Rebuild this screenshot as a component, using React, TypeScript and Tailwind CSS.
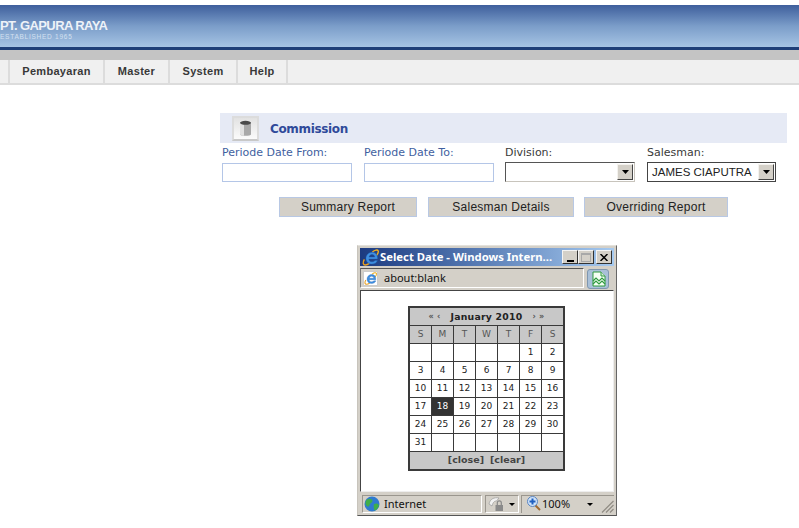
import React from "react";

const IeIcon = ({ size = 18 }: { size?: number }) => (
  <svg width={size} height={size} viewBox="0 0 18 18" className="shrink-0">
    <path d="M2.5 11C0.5 14.5 1 17 3.5 17C5 17 6.8 16 8 15" fill="none" stroke="#e8a020" strokeWidth="1.5" />
    <path d="M11 3.2C13.5 1 16.5 0.3 17.2 2C17.6 3.3 16.8 5 15.4 6.8" fill="none" stroke="#f0b020" strokeWidth="1.4" />
    <path d="M14.5 10.6H7.2C7.4 12.6 9 13.6 10.6 13.6C12 13.6 13 13 13.8 12.2H16.4C15.4 14.8 13.3 16 10.6 16C7 16 4.2 13.6 4.2 10C4.2 6 7.2 3.4 10.8 3.4C14.4 3.4 16.6 6 16.4 10.6ZM7.4 8.6H13.6C13.4 7 12.3 5.8 10.6 5.8C9 5.8 7.7 7 7.4 8.6Z" fill="#3f8fe0" fillRule="evenodd" stroke="#1c5fb0" strokeWidth="0.4" />
  </svg>
);

const Field = ({ label, width, dark, children }: { label: string; width: string; dark?: boolean; children: React.ReactNode }) => (
  <div className={`flex flex-col ${width}`}>
    <span className={`h-[20px] text-[11px] leading-[19px] whitespace-nowrap [font-family:'DejaVu_Sans',sans-serif] ${dark ? "text-[#3a3a3a]" : "text-[#3f5f9f]"}`}>{label}</span>
    {children}
  </div>
);

const TextInput = () => <div className="h-[19px] border border-[#b4c6e7] bg-white" />;

const Select = ({ value }: { value?: string }) => (
  <div className={`-mt-px flex h-[20px] items-stretch border bg-white p-px ${value ? "border-[#444]" : "border-t-[#555] border-l-[#555] border-r-[#c8c4bc] border-b-[#c8c4bc]"}`}>
    <span className="flex-1 pl-[3px] text-[11.5px] leading-[17px] whitespace-nowrap text-[#222] [font-family:'Liberation_Sans',sans-serif]">{value}</span>
    <span className="flex w-[16px] items-center justify-center border border-t-[#f4f2ee] border-l-[#f4f2ee] border-r-[#444] border-b-[#444] bg-[#d4d0c8]">
      <svg width="7" height="4" viewBox="0 0 7 4"><path d="M0 0H7L3.5 4Z" fill="#000" /></svg>
    </span>
  </div>
);

const Btn = ({ label, width }: { label: string; width: string }) => (
  <button className={`h-[20px] ${width} border border-[#b8c8e4] bg-[#d4d0c8] text-[12px] leading-[18px] tracking-[0.25px] text-[#222] [font-family:'Liberation_Sans',sans-serif]`}>{label}</button>
);

const weeks: (number | null)[][] = [
  [null, null, null, null, null, 1, 2],
  [3, 4, 5, 6, 7, 8, 9],
  [10, 11, 12, 13, 14, 15, 16],
  [17, 18, 19, 20, 21, 22, 23],
  [24, 25, 26, 27, 28, 29, 30],
  [31, null, null, null, null, null, null],
];

const Calendar = () => (
  <div className="h-fit w-[157px] border-2 border-[#3a3a3a] bg-[#3a3a3a] text-[#222] [font-family:'DejaVu_Sans',sans-serif]">
    <div className="flex h-[17px] items-center justify-center gap-[10px] bg-[#c8c8c8] text-[9.3px] font-bold tracking-[0.25px]">
      <span className="text-[8px] text-[#555]">« ‹</span>
      <span>January 2010</span>
      <span className="text-[8px] text-[#555]">› »</span>
    </div>
    <div className="mt-px grid grid-cols-[repeat(7,21px)] gap-px">
      {["S", "M", "T", "W", "T", "F", "S"].map((d, i) => (
        <div key={i} className="flex h-[17px] items-center justify-center bg-[#c8c8c8] text-[9px] text-[#555]">{d}</div>
      ))}
      {weeks.flat().map((d, i) => (
        <div key={i} className={`flex h-[17px] items-center justify-center text-[9px] ${d === 18 ? "bg-[#333] text-white" : "bg-white"}`}>{d}</div>
      ))}
    </div>
    <div className="mt-px flex h-[17px] items-center justify-center gap-[6px] bg-[#c8c8c8] text-[9.5px] font-bold text-[#444]">
      <span>[close]</span>
      <span>[clear]</span>
    </div>
  </div>
);

const CapBtn = ({ children }: { children: React.ReactNode }) => (
  <div className="flex h-[14px] w-[16px] items-center justify-center border border-t-[#f4f4f4] border-l-[#f4f4f4] border-r-[#333] border-b-[#333] bg-[#d4d0c8]">{children}</div>
);

const PopupWindow = () => (
  <div className="absolute top-[245px] left-[357px] flex h-[271px] w-[260px] flex-col border border-t-[#e4e2dc] border-l-[#c8c4bc] border-r-[#666] border-b-[#555] bg-[#d4d0c8] p-[2px]">
    <div className="flex h-[18px] shrink-0 items-center bg-gradient-to-r from-[#1c3a80] to-[#a6caf0] pr-[2px] pl-[2px]">
      <IeIcon size={17} />
      <span className="ml-px flex-1 text-[11.3px] font-bold whitespace-nowrap text-white [font-family:'Noto_Sans',sans-serif]">Select Date - Windows Intern...</span>
      <div className="flex">
        <CapBtn><span className="mt-[7px] h-[2px] w-[7px] bg-black" /></CapBtn>
        <CapBtn><span className="h-[9px] w-[10px] border border-t-2 border-[#a8a8a8]" /></CapBtn>
        <span className="w-[2px]" />
        <CapBtn>
          <svg width="8" height="7" viewBox="0 0 8 7"><path d="M0.5 0L7.5 7M7.5 0L0.5 7" stroke="#000" strokeWidth="1.5" /></svg>
        </CapBtn>
      </div>
    </div>
    <div className="mt-[2px] flex h-[22px] shrink-0 gap-[3px] pr-[5px]">
      <div className="flex h-[20px] flex-1 items-center border border-t-[#555] border-l-[#777] border-r-white border-b-white pl-[2px]">
        <div className="flex h-[15px] w-[15px] items-center justify-center border border-[#ccc] bg-white">
          <IeIcon size={13} />
        </div>
        <span className="mt-px ml-[6px] text-[11px] text-[#111] [font-family:'Noto_Sans',sans-serif]">about:blank</span>
      </div>
      <div className="mt-px flex h-[20px] w-[22px] items-center justify-center rounded-[3px] border border-[#7f97b0] bg-[#a9c0d8]">
        <svg width="15" height="16" viewBox="0 0 15 16">
          <path d="M2 1H10L14 5V15H2Z" fill="#f4fff4" stroke="#2f9a3f" />
          <path d="M10 1V5H14" fill="#d8f0d8" stroke="#2f9a3f" />
          <path d="M2 10L5 7L8 10L11 7L14 10M2 13L5 10L8 13L11 10L14 13" fill="none" stroke="#2f9a3f" strokeWidth="1.2" />
        </svg>
      </div>
    </div>
    <div className="flex min-h-0 flex-1 border border-t-[#444] border-l-[#444] border-r-[#eee] border-b-[#eee] bg-white pt-[15px] pl-[47px]">
      <Calendar />
    </div>
    <div className="flex h-[21px] shrink-0 items-end text-[11px] text-[#111] [font-family:'Noto_Sans',sans-serif]">
      <div className="ml-[2px] flex h-[18px] w-[120px] items-center gap-[4px] border border-t-[#9a968e] border-l-[#9a968e] border-r-white border-b-white pl-[1px]">
        <svg width="16" height="16" viewBox="0 0 16 16" className="shrink-0">
          <circle cx="8" cy="8" r="7.5" fill="#2f7ad0" />
          <path d="M3 3.5C6 2 8 3 8.5 5C8 7 6 7 5.5 9C5 11 3.5 11 2 9C1 7 1.5 5 3 3.5ZM10 8C12 7 14 7.5 15 9C14.5 12 12.5 14 10.5 14.5C9.5 12 9.5 10 10 8Z" fill="#3fae4a" />
        </svg>
        <span>Internet</span>
      </div>
      <div className="ml-[3px] flex h-[18px] w-[34px] items-center gap-[4px] border border-t-[#9a968e] border-l-[#9a968e] border-r-white border-b-white pl-[2px]">
        <svg width="17" height="16" viewBox="0 0 17 16" className="shrink-0">
          <path d="M1 8C2 3 6 1 11 2L8.5 5C6.5 5 5 6 4 10Z" fill="#f2f2f2" stroke="#9a9a9a" strokeWidth="0.7" />
          <rect x="7.5" y="9" width="7.5" height="6" fill="#8a8a8a" />
          <path d="M9.3 9V6.8A2 2 0 0 1 13.3 6.8V9" fill="none" stroke="#888" strokeWidth="1.2" />
        </svg>
        <svg width="6" height="3" viewBox="0 0 6 3" className="shrink-0"><path d="M0 0H6L3 3Z" fill="#000" /></svg>
      </div>
      <div className="relative ml-[2px] flex h-[18px] flex-1 items-center border-t border-l border-t-[#9a968e] border-l-[#9a968e] pl-[5px]">
        <svg width="14" height="15" viewBox="0 0 14 15" className="mb-[2px] shrink-0">
          <path d="M8 9L13 14" stroke="#a06a30" strokeWidth="2" />
          <circle cx="5.5" cy="5.5" r="5" fill="#cfe3fa" stroke="#5a84c0" />
          <path d="M5.5 2.5V8.5M2.5 5.5H8.5" stroke="#1f5fc0" strokeWidth="2" />
        </svg>
        <span className="ml-px">100%</span>
        <svg className="ml-[17px] shrink-0" width="6" height="3" viewBox="0 0 6 3"><path d="M0 0H6L3 3Z" fill="#000" /></svg>
        <svg className="absolute right-0 bottom-0" width="13" height="13" viewBox="0 0 13 13">
          <path d="M12.5 1L1 12.5M12.5 5L5 12.5M12.5 9L9 12.5" stroke="#8f8b83" strokeWidth="1.2" />
        </svg>
      </div>
    </div>
  </div>
);

export default function App() {
  return (
    <div className="relative h-[528px] w-[799px] overflow-hidden bg-white">
      <header className="mt-[5px]">
        <div className="flex h-[42px] flex-col justify-start bg-gradient-to-b from-[#3f5f9c] via-[#7b9dc9] to-[#a6c4e4] pt-[14px]">
          <div className="text-[13px] leading-[14px] font-bold tracking-[-0.6px] text-[#eef2f8] [font-family:'Liberation_Sans',sans-serif]">PT. GAPURA RAYA</div>
          <div className="text-[6.5px] leading-[8px] tracking-[0.75px] text-[#d4e0f0] [font-family:'Liberation_Sans',sans-serif]">ESTABLISHED 1965</div>
        </div>
        <div className="h-[3px] bg-[#1f3f78]" />
        <div className="h-[10px] bg-[#c4c4c4]" />
      </header>
      <nav className="flex h-[25px] border-b-2 border-[#dcdcdc] bg-[#f0f0f0] text-[11px] font-semibold tracking-[0.3px] text-[#383838] [font-family:'Liberation_Sans',sans-serif]">
        <div className="w-[10px] border-r-2 border-[#dcdcdc]" />
        {[
          ["Pembayaran", "w-[95px]"],
          ["Master", "w-[65px]"],
          ["System", "w-[68px]"],
          ["Help", "w-[50px]"],
        ].map(([t, w]) => (
          <div key={t} className={`flex ${w} items-center justify-center border-r-2 border-[#dcdcdc]`}>{t}</div>
        ))}
      </nav>
      <main className="mt-[28px] ml-[220px] w-[567px]">
        <div className="flex h-[30px] items-center bg-[#e6eaf5] pl-[12px]">
          <div className="flex h-[25px] w-[27px] items-center justify-center border-[2px] border-[#dcdcdc] border-b-[#c8c8c8] bg-gradient-to-b from-[#e2e2e2] to-[#fbfbfb]">
            <svg width="13" height="17" viewBox="0 0 13 17">
              <path d="M1 2.5V14.5C1 16.2 12 16.2 12 14.5V2.5Z" fill="#a8a8a8" />
              <path d="M1 2.5V14.5C2 15.5 3.5 15.7 5 15.8V3Z" fill="#e0e0e0" />
              <ellipse cx="6.5" cy="2.8" rx="5.5" ry="2" fill="#4a4a4a" />
            </svg>
          </div>
          <span className="mt-[2px] ml-[11px] text-[12px] font-bold tracking-[-0.35px] text-[#2f4a9a] [font-family:'DejaVu_Sans',sans-serif]">Commission</span>
        </div>
        <div className="flex gap-[12px] pl-[2px]">
          <Field label="Periode Date From:" width="w-[130px]"><TextInput /></Field>
          <Field label="Periode Date To:" width="w-[130px]"><TextInput /></Field>
          <div className="-ml-px flex gap-[12px]">
            <Field label="Division:" width="w-[130px]" dark><Select /></Field>
            <Field label="Salesman:" width="w-[129px]" dark><Select value="JAMES CIAPUTRA" /></Field>
          </div>
        </div>
        <div className="mt-[15px] flex items-start gap-[10px] pl-[59px]">
          <Btn label="Summary Report" width="w-[138px]" />
          <div className="ml-px flex"><Btn label="Salesman Details" width="w-[146px]" /></div>
          <Btn label="Overriding Report" width="w-[144px]" />
        </div>
      </main>
      <PopupWindow />
    </div>
  );
}
